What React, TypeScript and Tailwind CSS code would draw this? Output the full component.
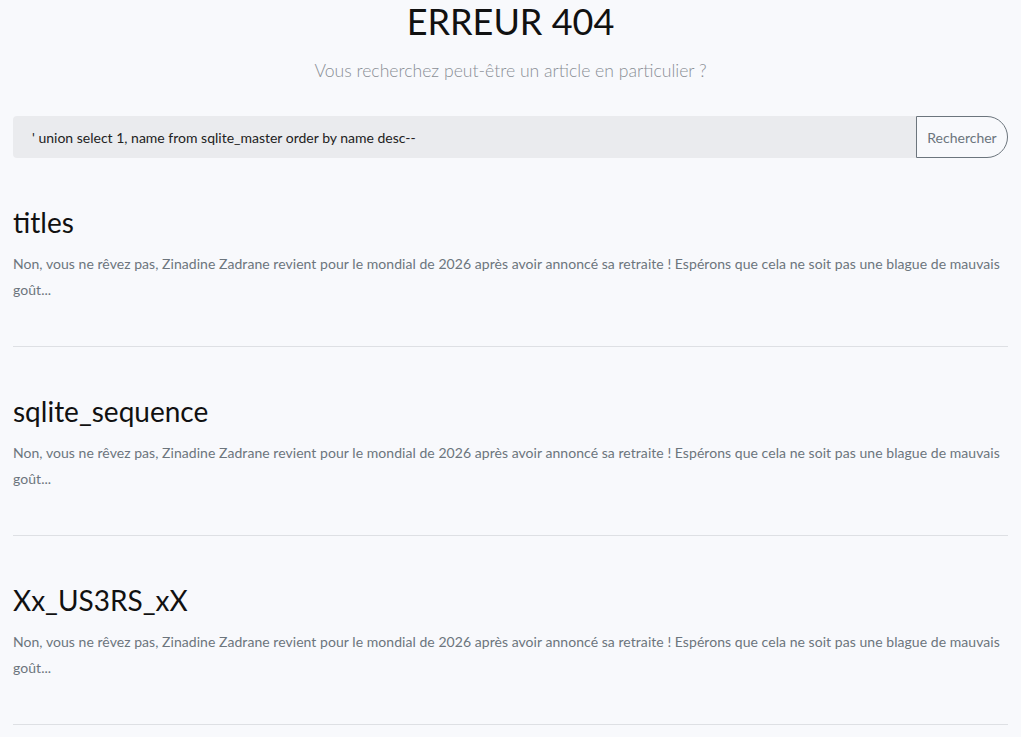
import React from "react";

const items = ["titles", "sqlite_sequence", "Xx_US3RS_xX"];
const desc =
  "Non, vous ne rêvez pas, Zinadine Zadrane revient pour le mondial de 2026 après avoir annoncé sa retraite ! Espérons que cela ne soit pas une blague de mauvais goût...";

export default function App() {
  return (
    <div
      className="min-h-[737px] bg-[#f8f9fc] px-[13px] overflow-hidden"
      style={{ fontFamily: "Lato, 'Open Sans', sans-serif" }}
    >
      <h1 className="text-center text-[36px] leading-[43px] text-[#111]">ERREUR 404</h1>
      <p className="mt-[15px] text-center text-[17.6px] leading-[26px] font-light text-[#8a8f96]">
        Vous recherchez peut-être un article en particulier ?
      </p>
      <div className="mt-[32px] flex h-[42px]">
        <div className="flex flex-1 items-center rounded-l-[4px] bg-[#eaebee] pl-[19px] text-[14px] text-[#222]">
          ' union select 1, name from sqlite_master order by name desc--
        </div>
        <button className="w-[92px] rounded-r-[21px] border border-[#6c757d] text-[14px] text-[#6c757d]">
          Rechercher
        </button>
      </div>
      <div className="mt-[47px]">
        {items.map((t) => (
          <div key={t} className="mb-[47px]">
            <h2 className="text-[28px] leading-[34px] text-[#111]">{t}</h2>
            <p className="mt-[12px] text-[14px] leading-[26px] text-[#6c757d] tracking-[0.05px]">{desc}</p>
            <hr className="mt-[43px] border-t border-[#dee0e4]" />
          </div>
        ))}
      </div>
    </div>
  );
}
